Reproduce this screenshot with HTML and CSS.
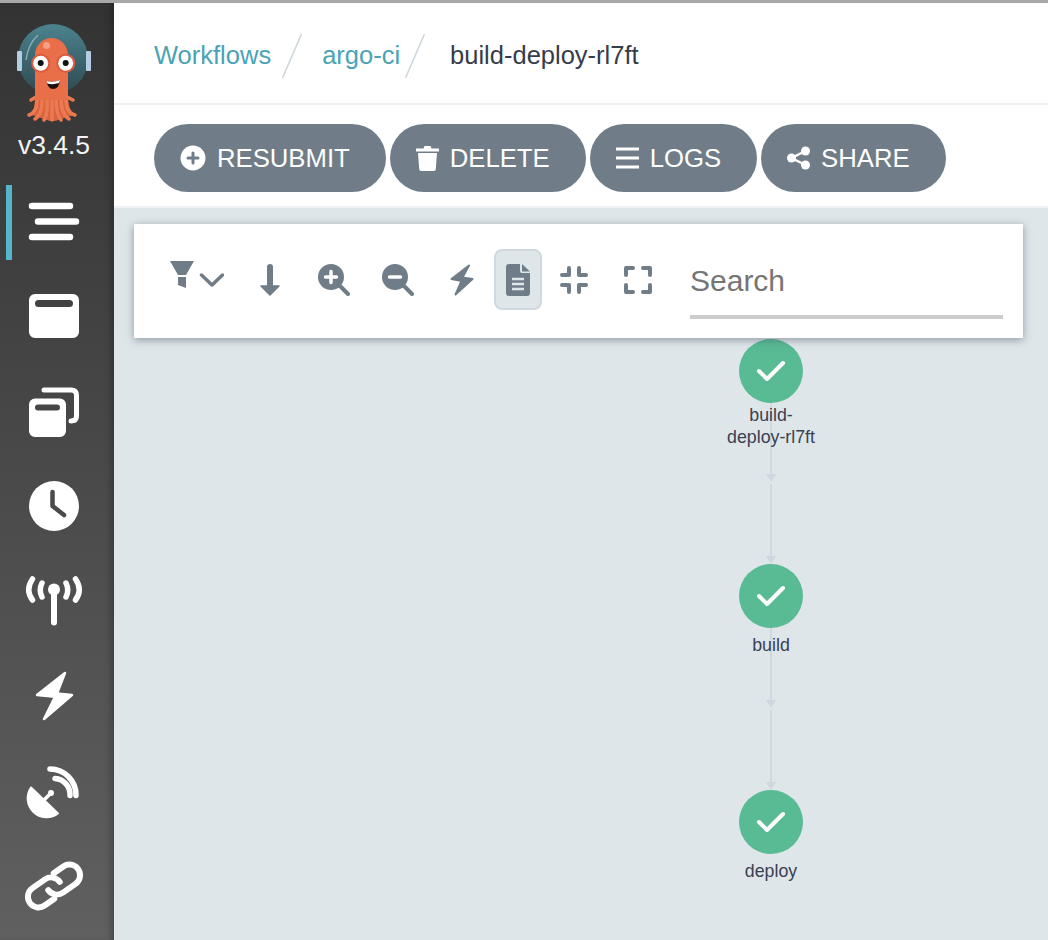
FILE: index.html
```html
<!DOCTYPE html>
<html lang="en">
<head>
    <meta charset="UTF-8">
    <meta name="viewport" content="width=device-width, initial-scale=1.0">
    <title>build-deploy-rl7ft</title>
    <link rel="stylesheet" href="styles.css">
</head>
<body>

<div class="top-edge"></div>

<div class="app">
    <aside class="sidebar">
        <svg class="logo" viewBox="0 0 74 98">
            <defs>
                <linearGradient id="helmet" x1="0" y1="0" x2="0" y2="1">
                    <stop offset="0" stop-color="#4b838f"/>
                    <stop offset="1" stop-color="#2f4a50"/>
                </linearGradient>
            </defs>
            <circle cx="36" cy="35" r="35" fill="url(#helmet)"/>
            <rect x="0" y="27" width="5" height="20" rx="1" fill="#b4cde3"/>
            <rect x="69" y="27" width="5" height="20" rx="1" fill="#b4cde3"/>
            <path d="M9 36 Q11 20 21 11" fill="none" stroke="#86adb5" stroke-width="1.500"/>
            <!-- tentacles -->
            <path d="M18 70 Q18 86 15 91 L33 97 H38 L57 91 Q51 86 51 70 Z" fill="#d9633e"/>
            <g fill="none" stroke="#ec7a50" stroke-width="3.500" stroke-linecap="round">
                <path d="M20 72 Q21 88 12 91"/>
                <path d="M25 74 Q26 90 18 95"/>
                <path d="M30 74 Q31 90 27 96"/>
                <path d="M35 74 V96"/>
                <path d="M39 74 Q39 90 44 96"/>
                <path d="M44 74 Q44 90 52 95"/>
                <path d="M49 72 Q48 88 58 91"/>
                <path d="M19 73 L14 76"/>
                <path d="M50 73 L56 76"/>
            </g>
            <path d="M18 76 V31 A16.500 17 0 0 1 51 31 V76 Z" fill="#e96f48"/>
            <circle cx="29.500" cy="21.500" r="3.500" fill="#f3a083"/>
            <circle cx="23.700" cy="39.300" r="9.500" fill="#dc5a3e"/>
            <circle cx="48.700" cy="39.300" r="9.500" fill="#dc5a3e"/>
            <circle cx="23.700" cy="39.300" r="7.500" fill="#fff"/>
            <circle cx="48.700" cy="39.300" r="7.500" fill="#fff"/>
            <circle cx="23.700" cy="39" r="3" fill="#111"/>
            <circle cx="48.700" cy="39" r="3" fill="#111"/>
            <path d="M29.500 57 Q36 59 43 56 Q42 65 36 65 Q31 65 29.500 57 Z" fill="#1b1210"/>
            <path d="M29.500 57 Q36 59 43 56 L42 59 Q36 61 30.500 59.500 Z" fill="#fff"/>
        </svg>
        <div class="version">v3.4.5</div>

        <nav class="nav">
            <a class="nav-item active">
                <svg class="nav-icon" viewBox="0 0 60 50"><path d="M8 8H46M14 23.500H52M8 39H46" fill="none" stroke="#fff" stroke-width="6.500" stroke-linecap="round"/></svg>
            </a>
            <a class="nav-item">
                <svg class="nav-icon" viewBox="0 0 60 50"><path fill="#fff" fill-rule="evenodd" d="M11 2H49a6 6 0 0 1 6 6V40a6 6 0 0 1-6 6H11a6 6 0 0 1-6-6V8a6 6 0 0 1 6-6ZM14.500 8a3.500 3.500 0 0 0 0 7H45.500a3.500 3.500 0 0 0 0-7Z"/></svg>
            </a>
            <a class="nav-item">
                <svg class="nav-icon" viewBox="0 0 60 50"><path d="M20 3H47Q52.500 3 52.500 8.500V29Q52.500 34 47 34" fill="none" stroke="#fff" stroke-width="5" stroke-linecap="round"/><path fill="#fff" fill-rule="evenodd" d="M11 11.500H36a6 6 0 0 1 6 6V44a6 6 0 0 1-6 6H11a6 6 0 0 1-6-6V17.500a6 6 0 0 1 6-6ZM14 17.500a3 3 0 0 0 0 6H33a3 3 0 0 0 0-6Z"/></svg>
            </a>
            <a class="nav-item">
                <svg class="nav-icon" viewBox="0 0 60 50"><circle cx="30" cy="25" r="25" fill="#fff"/><path d="M28.500 11V25L40 34" fill="none" stroke="#4a4a4a" stroke-width="4.500" stroke-linecap="round" stroke-linejoin="round"/></svg>
            </a>
            <a class="nav-item">
                <svg class="nav-icon" viewBox="0 0 60 50">
                    <circle cx="30" cy="13.500" r="6" fill="#fff"/>
                    <path d="M30 15V46.500" stroke="#fff" stroke-width="6" stroke-linecap="round"/>
                    <path d="M18 7Q14.500 14 18 21M42 7Q45.500 14 42 21M8.500 3Q1 14 8.500 24M51.500 3Q59 14 51.500 24" fill="none" stroke="#fff" stroke-width="5.500" stroke-linecap="round"/>
                </svg>
            </a>
            <a class="nav-item">
                <svg class="nav-icon" viewBox="0 0 60 50"><path d="M41 3L13 25L31 26.700L20 49L48 25L33 23.500Z" fill="#fff" stroke="#fff" stroke-width="2.500" stroke-linejoin="round"/></svg>
            </a>
            <a class="nav-item">
                <svg class="nav-icon" viewBox="0 0 60 50">
                    <path d="M7 22.500A19 19 0 0 0 34 48.500Z" fill="#fff" stroke="#fff" stroke-width="2" stroke-linejoin="round"/>
                    <path d="M20 35L27 28" stroke="#fff" stroke-width="3.500" stroke-linecap="round"/>
                    <circle cx="27" cy="28" r="3" fill="#fff"/>
                    <path d="M31 13.500A16 16 0 0 1 46 30.500M26 4A26 26 0 0 1 52 30.500" fill="none" stroke="#fff" stroke-width="5.500" stroke-linecap="round"/>
                </svg>
            </a>
            <a class="nav-item">
                <svg class="nav-icon" viewBox="0 0 60 50">
                    <g transform="translate(30 27) rotate(-35) scale(1.180)" fill="none" stroke="#fff" stroke-width="5" stroke-linecap="round">
                        <path d="M-6 9H-16A9 9 0 0 1-16-9H-3A9 9 0 0 1 6 0"/>
                        <path d="M6-9H16A9 9 0 0 1 16 9H3A9 9 0 0 1-6 0"/>
                    </g>
                </svg>
            </a>
        </nav>
    </aside>

    <main class="content">
        <header class="breadcrumbs">
            <a class="crumb">Workflows</a>
            <svg class="slash slash-first" viewBox="0 0 20 44"><path d="M19.500 0L.5 44" stroke="#ccd6dd" stroke-width="1.500"/></svg>
            <a class="crumb">argo-ci</a>
            <svg class="slash slash-second" viewBox="0 0 20 44"><path d="M19.500 0L.5 44" stroke="#ccd6dd" stroke-width="1.500"/></svg>
            <span class="crumb-current">build-deploy-rl7ft</span>
        </header>

        <div class="actions">
            <button class="action-button" type="button">
                <svg class="action-icon" viewBox="0 0 26 26"><circle cx="13" cy="13" r="12.500" fill="#fff"/><path d="M13 8V18M8 13H18" stroke="#707d88" stroke-width="3" stroke-linecap="round"/></svg>
                RESUBMIT
            </button>
            <button class="action-button" type="button">
                <svg class="action-icon icon-narrow" viewBox="0 0 23 26"><path fill="#fff" d="M0 3.500H7.500L8.500 1H14.500L15.500 3.500H23V6.500H0ZM2 8H21L19.800 24a2 2 0 0 1-2 2H5.200a2 2 0 0 1-2-2Z"/></svg>
                DELETE
            </button>
            <button class="action-button" type="button">
                <svg class="action-icon icon-narrow" viewBox="0 0 23 26"><path d="M0 4H23M0 13H23M0 22H23" stroke="#fff" stroke-width="3"/></svg>
                LOGS
            </button>
            <button class="action-button" type="button">
                <svg class="action-icon icon-narrow" viewBox="0 0 23 26"><circle cx="18.500" cy="6" r="4.500" fill="#fff"/><circle cx="4.500" cy="13" r="4.500" fill="#fff"/><circle cx="18.500" cy="20" r="4.500" fill="#fff"/><path d="M18.500 6L4.500 13L18.500 20" fill="none" stroke="#fff" stroke-width="2.500"/></svg>
                SHARE
            </button>
        </div>

        <section class="canvas">
            <div class="toolbar">
                <button class="tool tool-filter" type="button">
                    <svg width="54" height="28" viewBox="0 0 54 28">
                        <path d="M0 0H24L16 14H8ZM8 16H16V27L8 24Z" fill="#707d88"/>
                        <path d="M31.500 14L42 24L52.500 14" fill="none" stroke="#707d88" stroke-width="3.500" stroke-linecap="round" stroke-linejoin="round"/>
                    </svg>
                </button>
                <button class="tool" type="button">
                    <svg width="20" height="32" viewBox="0 0 20 32"><path d="M10 3V22" stroke="#707d88" stroke-width="6" stroke-linecap="round"/><path d="M1 22H19L10 31Z" fill="#707d88" stroke="#707d88" stroke-width="1.500" stroke-linejoin="round"/></svg>
                </button>
                <button class="tool" type="button">
                    <svg width="32" height="32" viewBox="0 0 32 32"><circle cx="13" cy="13" r="13" fill="#707d88"/><path d="M22 22L30 30" stroke="#707d88" stroke-width="4" stroke-linecap="round"/><path d="M13 7.500V18.500M7.500 13H18.500" stroke="#fff" stroke-width="3.500" stroke-linecap="round"/></svg>
                </button>
                <button class="tool" type="button">
                    <svg width="32" height="32" viewBox="0 0 32 32"><circle cx="13" cy="13" r="13" fill="#707d88"/><path d="M22 22L30 30" stroke="#707d88" stroke-width="4" stroke-linecap="round"/><path d="M7.500 13H18.500" stroke="#fff" stroke-width="3.500" stroke-linecap="round"/></svg>
                </button>
                <button class="tool" type="button">
                    <svg width="24" height="32" viewBox="0 0 24 32"><path d="M19 1.500L1.500 15L11.500 17L5.500 30.500L22.500 15L12.500 13.500Z" fill="#707d88" stroke="#707d88" stroke-width="2" stroke-linejoin="round"/></svg>
                </button>
                <button class="tool tool-active" type="button">
                    <svg width="24" height="32" viewBox="0 0 24 32">
                        <path d="M3 0H14V7a2 2 0 0 0 2 2H24V29a3 3 0 0 1-3 3H3a3 3 0 0 1-3-3V3a3 3 0 0 1 3-3Z" fill="#707d88"/>
                        <path d="M16 0L24 7.500H16Z" fill="#707d88"/>
                        <path d="M6 15H18M6 20H18M6 25H18" stroke="#dfe6ea" stroke-width="2.500"/>
                    </svg>
                </button>
                <button class="tool" type="button">
                    <svg width="28" height="28" viewBox="0 0 28 28"><path d="M2 9H9V2M26 9H19V2M2 19H9V26M26 19H19V26" fill="none" stroke="#707d88" stroke-width="4" stroke-linecap="round" stroke-linejoin="round"/></svg>
                </button>
                <button class="tool" type="button">
                    <svg width="28" height="28" viewBox="0 0 28 28"><path d="M2 9V2H9M26 9V2H19M2 19V26H9M26 19V26H19" fill="none" stroke="#707d88" stroke-width="4" stroke-linecap="round" stroke-linejoin="round"/></svg>
                </button>
                <input class="search" type="text" placeholder="Search">
            </div>

            <!-- graph: nodes and edges sit on a free canvas -->
            <svg class="edges" width="20" height="582" viewBox="0 0 20 582">
                <path d="M10 195V267M10 276V348M10 420V492M10 502V574" stroke="#cfd8df" stroke-width="2"/>
                <path d="M5 266H15L10 274ZM5 348H15L10 356ZM5 492H15L10 500ZM5 574H15L10 582Z" fill="#cfd8df"/>
            </svg>

            <div class="node node-root">
                <div class="node-circle">
                    <svg width="30" height="24" viewBox="0 0 30 24"><path d="M3 12L11 20L27 4" fill="none" stroke="#fff" stroke-width="4" stroke-linecap="round" stroke-linejoin="round"/></svg>
                </div>
                <div class="node-label label-wrapped">build-<br>deploy-rl7ft</div>
            </div>
            <div class="node node-build">
                <div class="node-circle">
                    <svg width="30" height="24" viewBox="0 0 30 24"><path d="M3 12L11 20L27 4" fill="none" stroke="#fff" stroke-width="4" stroke-linecap="round" stroke-linejoin="round"/></svg>
                </div>
                <div class="node-label">build</div>
            </div>
            <div class="node node-deploy">
                <div class="node-circle">
                    <svg width="30" height="24" viewBox="0 0 30 24"><path d="M3 12L11 20L27 4" fill="none" stroke="#fff" stroke-width="4" stroke-linecap="round" stroke-linejoin="round"/></svg>
                </div>
                <div class="node-label">deploy</div>
            </div>
        </section>
    </main>
</div>

</body>
</html>
```

FILE: styles.css
```css
* {
    box-sizing: border-box;
}

html, body {
    height: 100%;
    margin: 0;
    overflow: hidden;
}

body {
    font-family: "Liberation Sans", Arial, sans-serif;
    display: flex;
    flex-direction: column;
    background-color: #fff;
}

.top-edge {
    height: 3px;
    background-color: #a8a8a8;
    flex: none;
}

.app {
    display: flex;
    flex: 1;
    min-height: 0;
}

/* sidebar */

.sidebar {
    width: 114px;
    flex: none;
    padding-top: 21px;
    background: linear-gradient(#333333, #606060);
    box-shadow: inset -6px 0 6px -3px rgba(0, 0, 0, 0.25);
}

.logo {
    display: block;
    width: 74px;
    height: 98px;
    margin-left: 17px;
}

.version {
    width: 108px;
    margin-top: 3px;
    color: #f4f4f4;
    font-size: 26.5px;
    line-height: 40px;
    text-align: center;
}

.nav {
    margin-top: 20px;
}

.nav-item {
    display: flex;
    align-items: center;
    justify-content: center;
    width: 90px;
    height: 75px;
    margin-left: 6px;
    margin-bottom: 19.5px;
    border-left: 6px solid transparent;
}

.nav-item.active {
    border-left-color: #55b5cc;
}

.nav-icon {
    display: block;
    width: 60px;
    height: 50px;
    overflow: visible;
}

/* header */

.content {
    flex: 1;
    min-width: 0;
    display: flex;
    flex-direction: column;
}

.breadcrumbs {
    display: flex;
    align-items: center;
    height: 102px;
    padding-left: 40px;
    padding-top: 4px;
    border-bottom: 2px solid #eff2f4;
    font-size: 25.5px;
    flex: none;
}

.crumb {
    color: #4aa3b5;
}

.crumb-current {
    color: #363c4a;
}

.slash {
    width: 20px;
    height: 44px;
    margin-top: 2px;
}

.slash-first {
    margin-left: 11px;
    margin-right: 20px;
}

.slash-second {
    margin-left: 5px;
    margin-right: 25px;
}

.actions {
    display: flex;
    gap: 4px;
    height: 103px;
    padding: 19px 0 0 40px;
    border-bottom: 2px solid #eff2f4;
    flex: none;
}

.action-button {
    display: flex;
    align-items: center;
    gap: 11px;
    height: 68px;
    padding: 0 36px 0 26px;
    border: none;
    border-radius: 34px;
    background-color: #707d88;
    color: #fff;
    font-family: inherit;
    font-size: 25.7px;
}

.action-icon {
    width: 26px;
    height: 26px;
}

.icon-narrow {
    width: 23px;
}

/* canvas */

.canvas {
    position: relative;
    flex: 1;
    padding: 16px 25px 0 20px;
    background-color: #dfe6ea;
    overflow: hidden;
}

.toolbar {
    position: relative;
    z-index: 2;
    display: flex;
    align-items: flex-start;
    height: 114px;
    padding: 25px 20px 0 24px;
    background-color: #fff;
    box-shadow: 0 2px 8px rgba(60, 75, 90, 0.5);
}

.tool {
    display: flex;
    align-items: center;
    justify-content: center;
    width: 64px;
    height: 61px;
    padding: 0;
    border: none;
    background: none;
    flex: none;
}

.tool-filter {
    width: 80px;
    padding-right: 2px;
}

.tool-filter svg {
    margin-bottom: 10px;
}

.tool-active {
    width: 48px;
    border: 2px solid #d1d9e0;
    border-radius: 8px;
    background-color: #dfe6ea;
}

.search {
    flex: 1;
    min-width: 0;
    height: 70px;
    margin-left: 20px;
    padding: 0 0 2px;
    border: none;
    border-bottom: 4px solid #ccc;
    outline: none;
    font-family: inherit;
    font-size: 30px;
}

.search::placeholder {
    color: #757575;
}

.edges {
    position: absolute;
    left: 647px;
    top: 0;
}

.node {
    position: absolute;
    left: 597px;
    width: 120px;
    text-align: center;
}

.node-root {
    top: 131px;
}

.node-build {
    top: 356px;
}

.node-deploy {
    top: 582px;
}

.node-circle {
    display: flex;
    align-items: center;
    justify-content: center;
    width: 64px;
    height: 64px;
    margin: 0 auto;
    border-radius: 50%;
    background-color: #58bb94;
}

.node-label {
    margin-top: 6px;
    color: #3a4052;
    font-size: 17.8px;
    line-height: 22px;
}

.label-wrapped {
    margin-top: 1px;
}
```
